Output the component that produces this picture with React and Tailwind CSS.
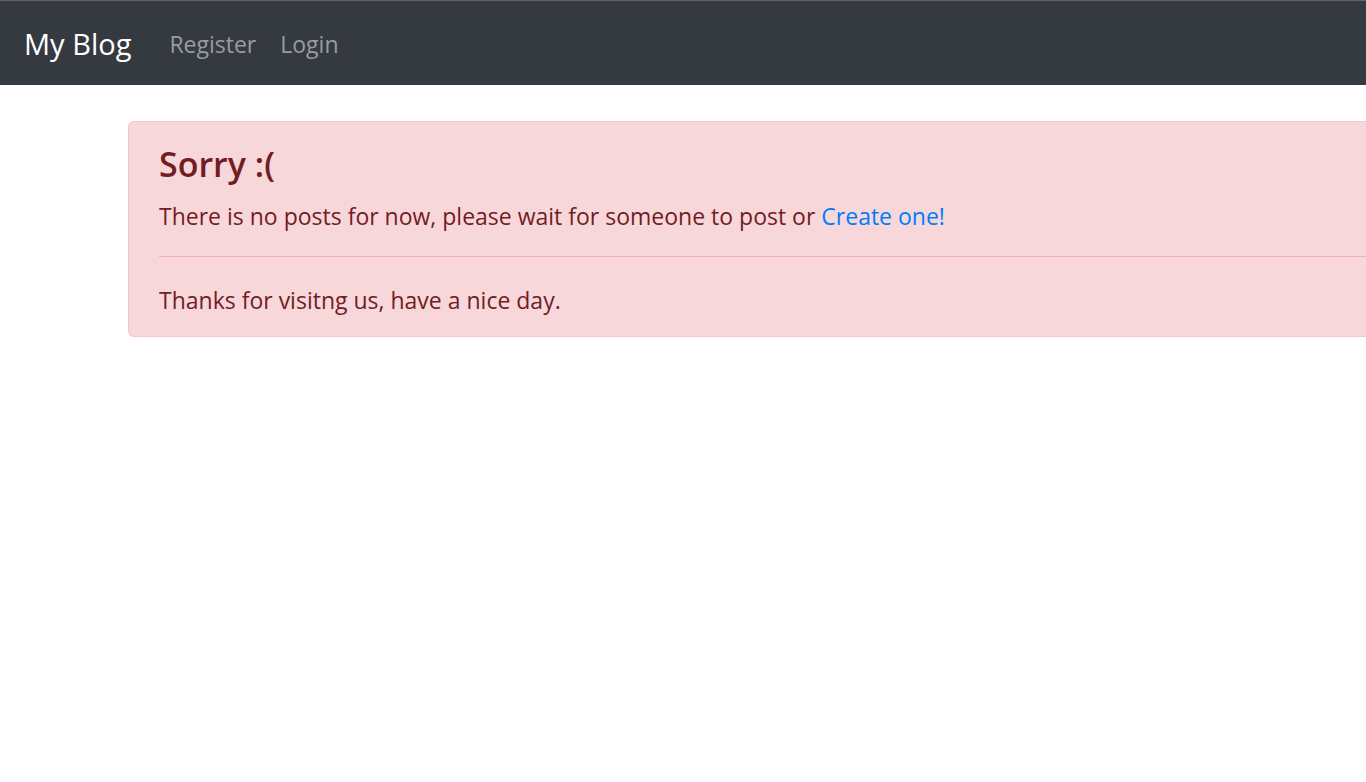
export default function App() {
  return (
    <div className="overflow-x-hidden bg-white font-['Open_Sans','Noto_Sans',sans-serif] text-[23px] leading-9">
      <nav className="flex items-center border-t border-[#606366] bg-[#343a40] px-6 pt-[13px] pb-[11px]">
        <a href="#" className="mr-[26px] py-2 text-[29px] leading-[44px] text-white">My Blog</a>
        <ul className="flex">
          <li><a href="#register" className="block p-3 text-[#999c9f]">Register</a></li>
          <li><a href="#login" className="block p-3 text-[#999c9f]">Login</a></li>
        </ul>
      </nav>
      <main className="mt-9 pl-32">
        <section role="alert" className="rounded-l-md border border-r-0 border-[#f5c6cb] bg-[#f8d7da] pt-5 pb-[18px] pl-[30px] text-[#721c24]">
          <h4 className="mb-3 text-[34px] leading-[44px] font-semibold">Sorry :(</h4>
          <p>There is no posts for now, please wait for someone to post or <a href="#create" className="text-[#007bff]">Create one!</a></p>
          <hr className="mt-[22px] mb-[25px] border-t border-solid border-[#f1b0b7]" />
          <p>Thanks for visitng us, have a nice day.</p>
        </section>
      </main>
    </div>
  );
}
